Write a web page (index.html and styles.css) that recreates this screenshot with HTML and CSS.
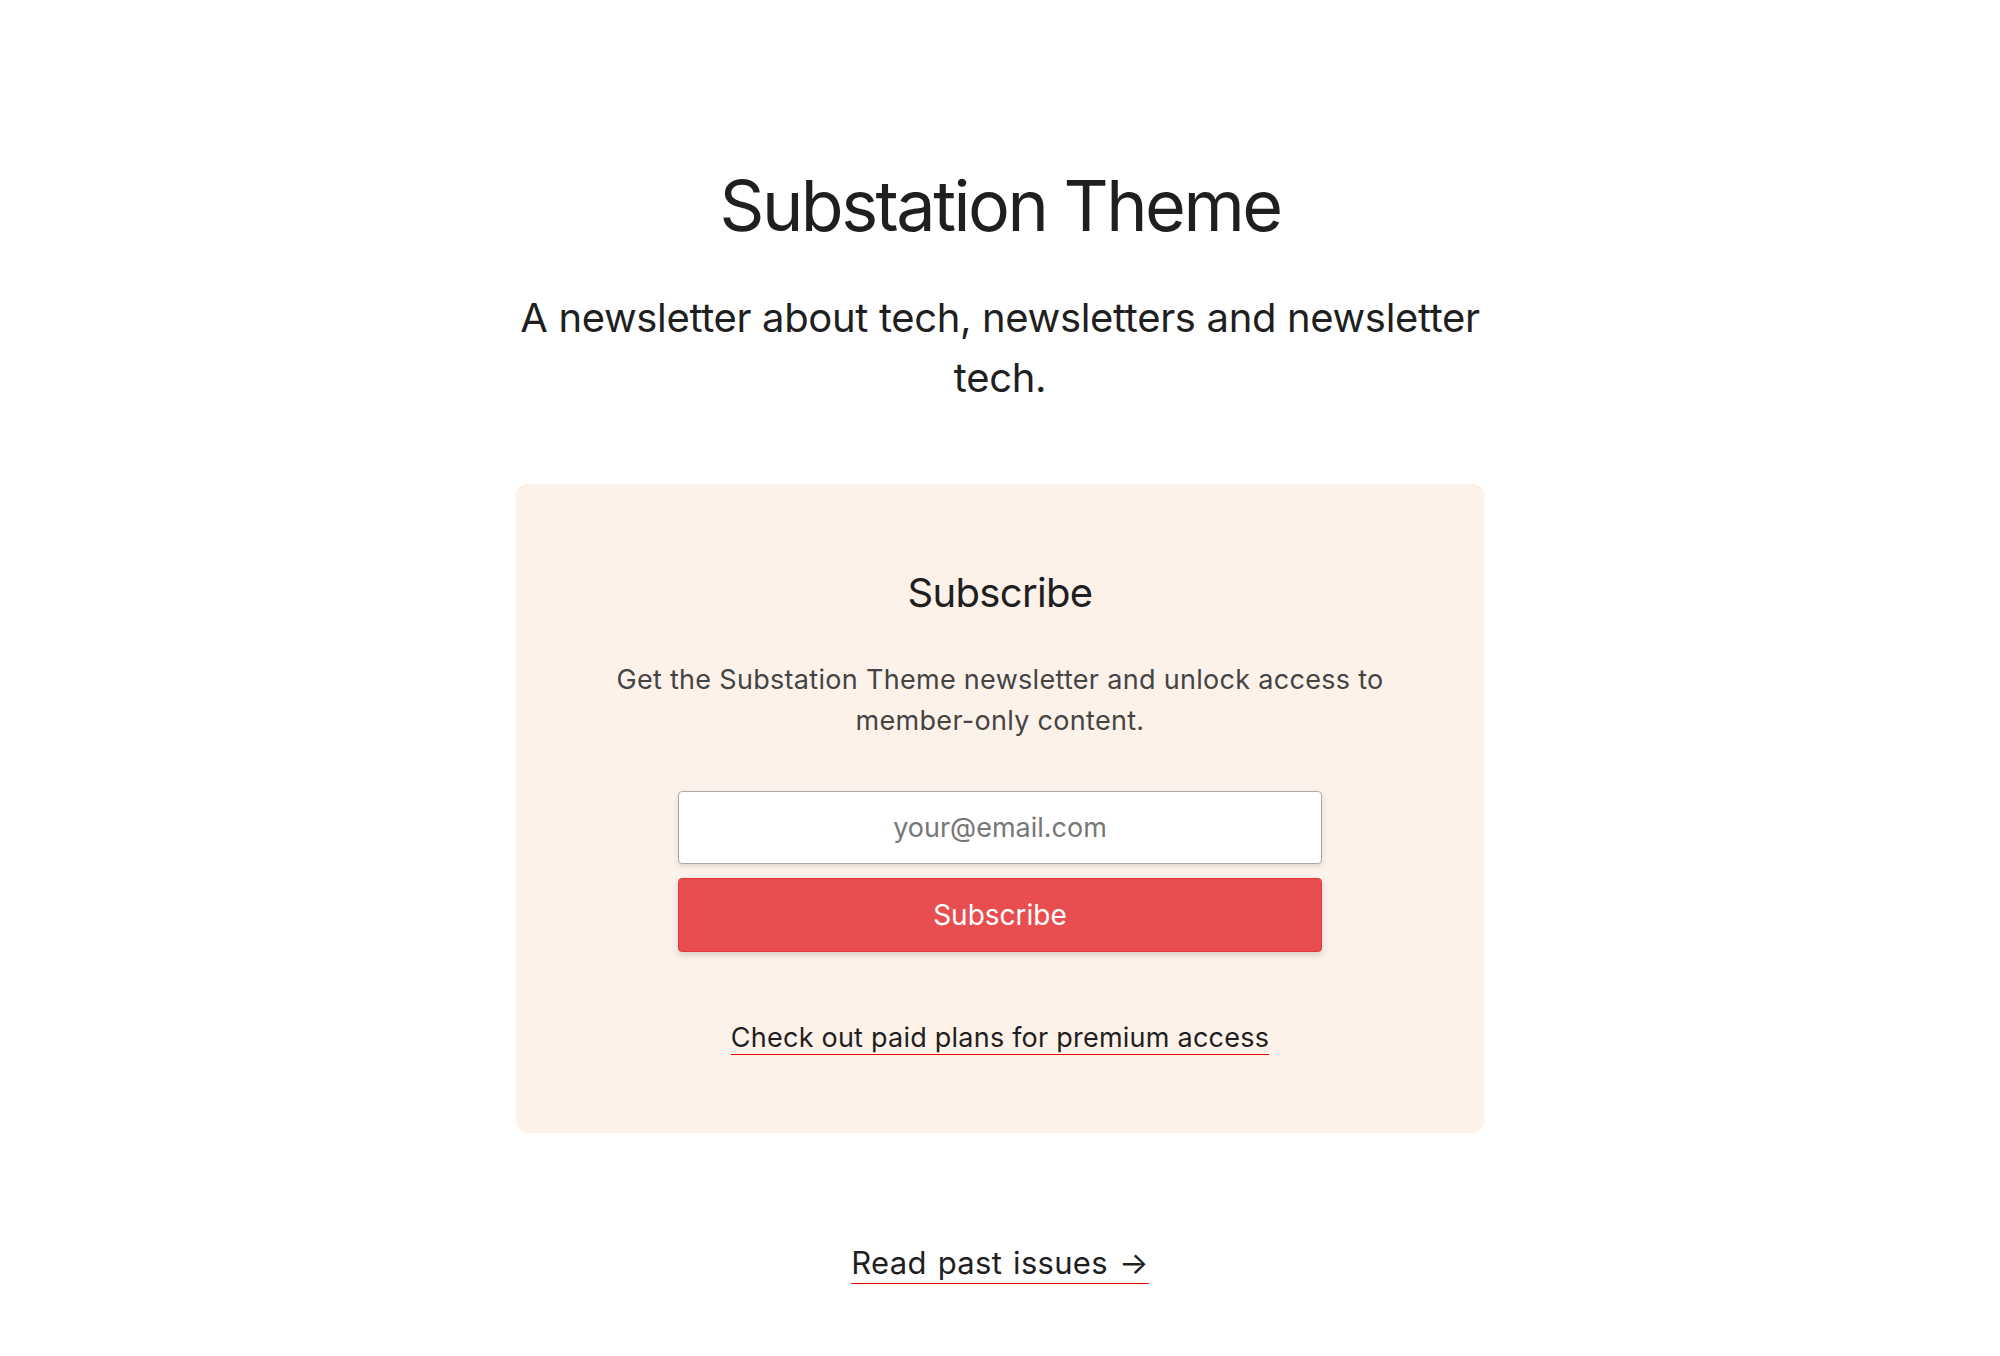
FILE: index.html
```html
<!DOCTYPE html>
<html lang="en">
<head>
    <meta charset="UTF-8">
    <meta name="viewport" content="width=device-width, initial-scale=1.0">
    <title>Substation Theme</title>
    <link rel="stylesheet" href="styles.css">
</head>
<body>
    <div class="page">
        <h1 class="site-title">Substation Theme</h1>
        <p class="site-desc">A newsletter about tech, newsletters and newsletter tech.</p>

        <div class="subscribe-box">
            <h2 class="box-title">Subscribe</h2>
            <p class="box-text">Get the Substation Theme newsletter and unlock access to member-only content.</p>
            <form class="subscribe-form">
                <input type="email" class="email-input" placeholder="your@email.com">
                <button type="button" class="subscribe-btn">Subscribe</button>
            </form>
            <a href="#" class="plans-link">Check out paid plans for premium access</a>
        </div>

        <a href="#" class="past-link">Read past issues →</a>
    </div>
</body>
</html>
```

FILE: styles.css
```css
body {
    margin: 0;
    font-family: Inter, "Noto Sans", sans-serif;
    color: #1f1f1f;
    background: #fff;
}
.page {
    display: flex;
    flex-direction: column;
    align-items: center;
    padding-top: 164px;
    text-align: center;
}
.site-title {
    margin: 0;
    font-size: 70px;
    font-weight: 400;
    line-height: 84px;
    letter-spacing: -2.5px;
}
.site-desc {
    max-width: 968px;
    margin: 40px 0 0;
    font-size: 40px;
    line-height: 60px;
    letter-spacing: -0.35px;
}
.subscribe-box {
    box-sizing: border-box;
    width: 968px;
    margin-top: 76px;
    padding: 85px 0 75px;
    border-radius: 12px;
    background: #fdf2ea;
}
.box-title {
    margin: 0;
    font-size: 40px;
    font-weight: 400;
    line-height: 48px;
    letter-spacing: -0.65px;
}
.box-text {
    margin: 42px auto 0;
    max-width: 800px;
    font-size: 27px;
    line-height: 41px;
    letter-spacing: 0.3px;
    color: #444;
}
.subscribe-form {
    display: flex;
    flex-direction: column;
    gap: 14px;
    width: 644px;
    margin: 50px auto 0;
}
.email-input {
    box-sizing: border-box;
    height: 73px;
    border: 1px solid #aaa;
    border-radius: 4px;
    box-shadow: 0 2px 5px rgba(0, 0, 0, 0.12);
    font-family: inherit;
    font-size: 27px;
    text-align: center;
    color: #222;
}
.email-input::placeholder {
    color: #777;
}
.subscribe-btn {
    height: 74px;
    border: 1px solid #e3393b;
    border-radius: 4px;
    background: #e84e4f;
    box-shadow: 0 3px 6px rgba(0, 0, 0, 0.15);
    font-family: inherit;
    font-size: 28px;
    color: #fff;
}
.plans-link {
    display: inline-block;
    margin-top: 65px;
    font-size: 27px;
    line-height: 41px;
    letter-spacing: 0.23px;
    color: #1f1f1f;
    text-decoration: underline;
    text-decoration-color: #e00;
    text-decoration-thickness: 1px;
    text-underline-offset: 7px;
}
.past-link {
    margin-top: 107px;
    font-size: 31px;
    line-height: 45px;
    letter-spacing: 0.3px;
    word-spacing: 2px;
    color: #1f1f1f;
    text-decoration: underline;
    text-decoration-color: #e00;
    text-decoration-thickness: 1px;
    text-underline-offset: 9px;
}
```
